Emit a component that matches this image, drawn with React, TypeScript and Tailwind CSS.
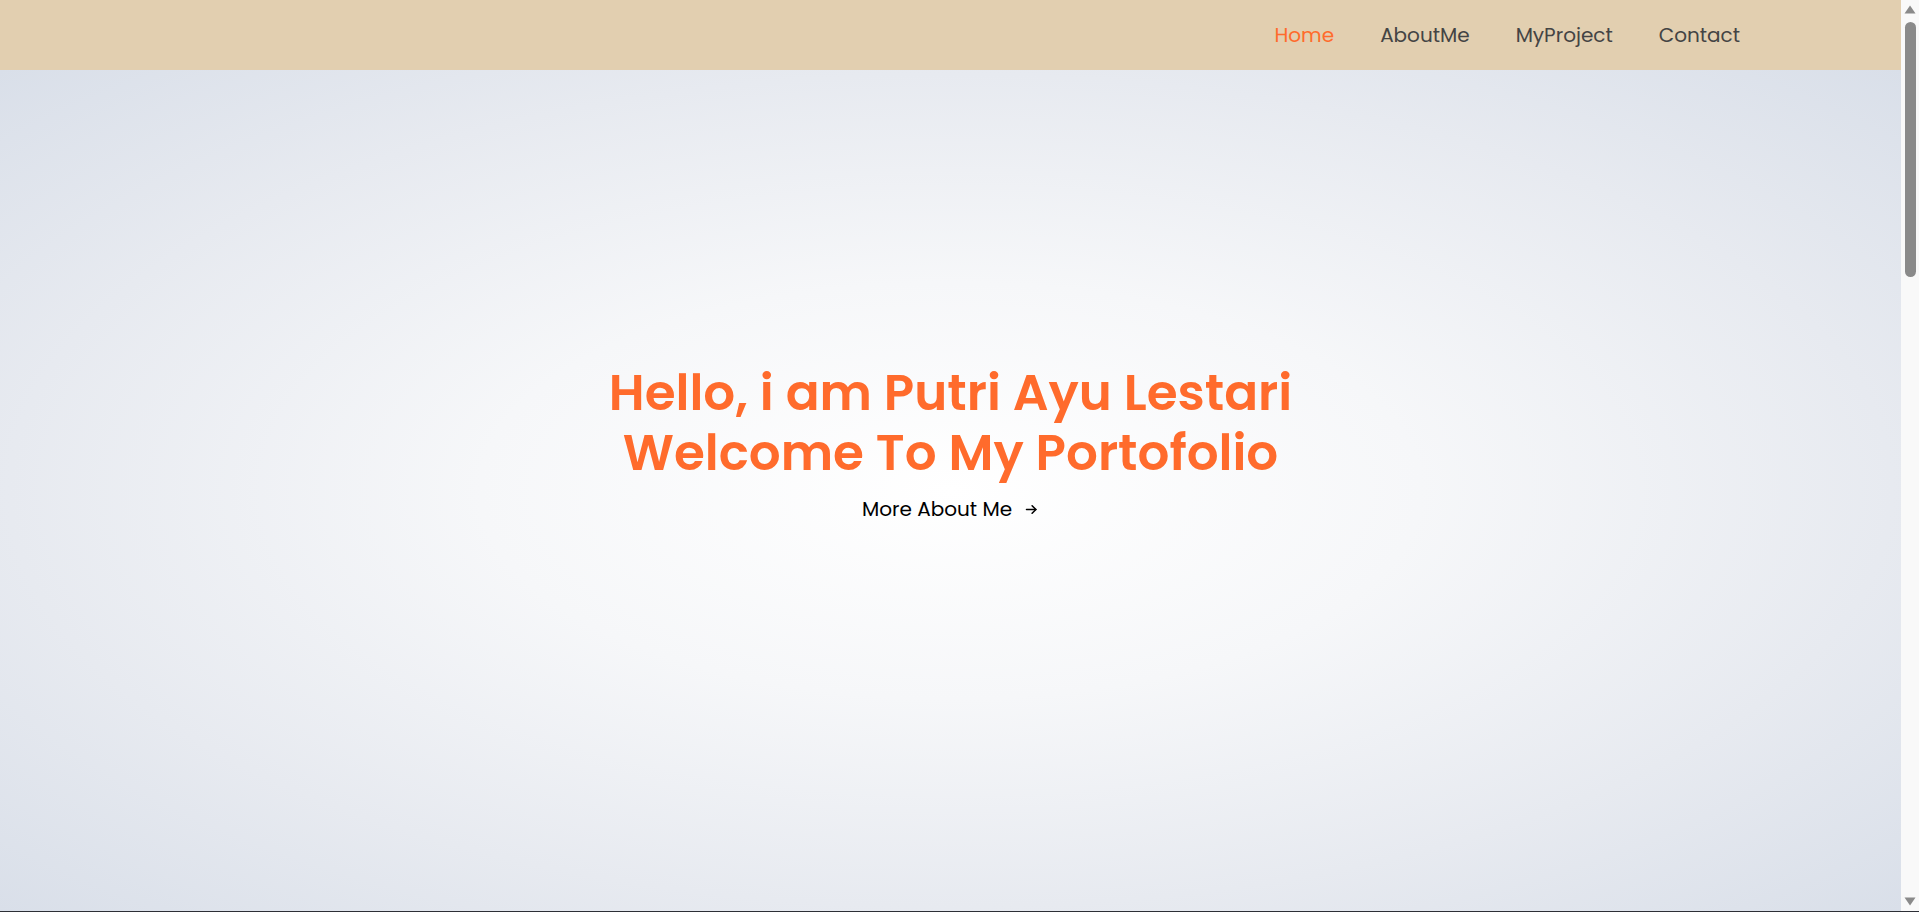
import React from "react";

const font = { fontFamily: "Poppins, Inter, 'Noto Sans', sans-serif" };

function ArrowIcon() {
  return (
    <svg width="15" height="15" viewBox="0 0 24 24" fill="none" stroke="currentColor" strokeWidth="2.5" strokeLinecap="round" strokeLinejoin="round">
      <path d="M4 12h15" />
      <path d="M13 6l6 6-6 6" />
    </svg>
  );
}

function Scrollbar() {
  return (
    <div className="w-[18px] h-full bg-[#f9f9f9] flex flex-col items-center pt-[5px] pb-[5px]">
      <svg width="12" height="9" viewBox="0 0 12 9" className="shrink-0">
        <path d="M6 0.5 L11.5 8.5 L0.5 8.5 Z" fill="#8a8a8a" />
      </svg>
      <div className="mt-[8px] w-[11px] h-[255px] rounded-[6px] bg-[#8a8a8a] shrink-0" />
      <div className="flex-1" />
      <svg width="12" height="9" viewBox="0 0 12 9" className="shrink-0">
        <path d="M0.5 0.5 L11.5 0.5 L6 8.5 Z" fill="#8a8a8a" />
      </svg>
    </div>
  );
}

export default function App() {
  const links = ["Home", "AboutMe", "MyProject", "Contact"];
  return (
    <div style={font} className="w-full h-[912px] flex flex-col overflow-hidden">
      <div className="flex-1 flex min-h-0">
        <main className="flex-1 flex flex-col min-w-0">
          <header className="h-[70px] shrink-0 bg-[#e2cfb0] flex items-center justify-end pr-[161px]">
            <ul className="flex items-center gap-[46px]">
              {links.map((l, i) => (
                <li key={l}>
                  <a href="#" className={`text-[20px] ${i === 0 ? "text-[#ff6b2c]" : "text-[#444444]"}`}>
                    {l}
                  </a>
                </li>
              ))}
            </ul>
          </header>
          <section className="flex-1 bg-[radial-gradient(ellipse_at_center,#ffffff_0%,#f6f7f9_35%,#e7eaf0_70%,#d9dfe9_100%)] flex flex-col items-center pt-[293px]">
            <h1 className="text-[50px] leading-[60px] font-semibold text-[#ff6b2c] text-center flex flex-col items-center">
              <span>Hello, i am Putri Ayu Lestari</span>
              <span>Welcome To My Portofolio</span>
            </h1>
            <a href="#" className="mt-[12px] flex items-center gap-[12px] text-[20px] leading-[28px] text-black">
              <span>More About Me</span>
              <ArrowIcon />
            </a>
          </section>
        </main>
        <Scrollbar />
      </div>
      <div className="h-px shrink-0 bg-[#2d2f36]" />
    </div>
  );
}
